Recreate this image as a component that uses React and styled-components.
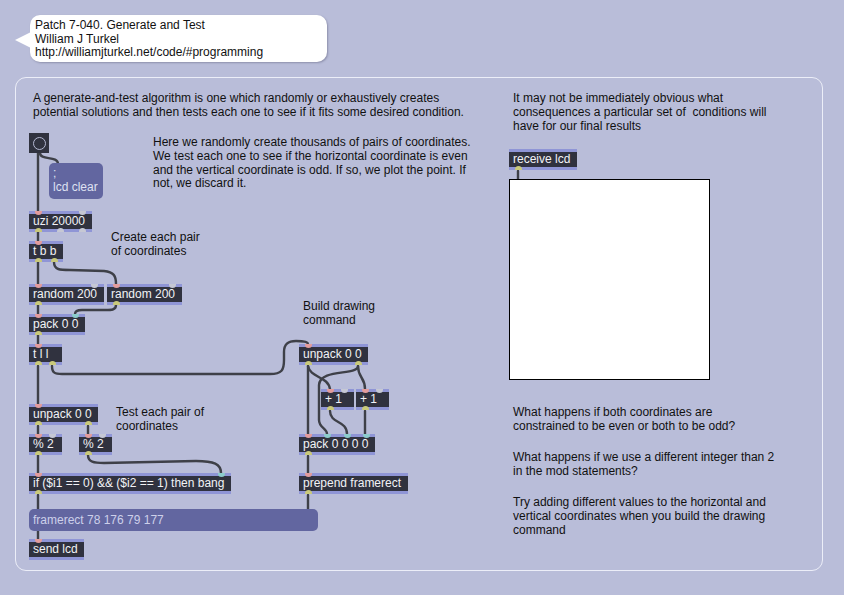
import styled, { createGlobalStyle, css } from "styled-components";

const GlobalStyle = createGlobalStyle`
  html, body {
    margin: 0;
    padding: 0;
    background: #b9bdd9;
  }
`;

const Page = styled.div`
  position: relative;
  width: 844px;
  height: 595px;
  overflow: hidden;
  background: #b9bdd9;
  font-family: "Liberation Sans", Arial, sans-serif;
  font-size: 12px;
  padding: 15px 0 0 0;
  box-sizing: border-box;
`;

const Bubble = styled.div`
  position: relative;
  margin-left: 30px;
  width: 297px;
  height: 47px;
  box-sizing: border-box;
  padding: 4px 5px;
  background: #ffffff;
  border-radius: 10px;
  box-shadow: 1px 1px 2px rgba(60, 60, 90, 0.35);
  color: #111;
  line-height: 13.5px;
  white-space: pre;

  &::before {
    content: "";
    position: absolute;
    left: -15px;
    top: 17px;
    border-style: solid;
    border-width: 8px 16px 8px 0;
    border-color: transparent #ffffff transparent transparent;
  }
`;

const Panel = styled.div`
  margin: 15px 0 0 15px;
  width: 808px;
  height: 494px;
  box-sizing: border-box;
  border: 1px solid #eceef8;
  border-radius: 11px;
`;

// the patcher canvas: every object sits at its own spot
const Comment = styled.div`
  position: absolute;
  left: ${(p) => p.$x}px;
  top: ${(p) => p.$y}px;
  color: #111;
  line-height: 13.8px;
  white-space: pre;
  z-index: 3;
`;

const Box = styled.div`
  position: absolute;
  left: ${(p) => p.$x}px;
  top: ${(p) => p.$y}px;
  width: ${(p) => p.$w}px;
  height: 21px;
  box-sizing: border-box;
  background: #30323f;
  border-top: 3px solid #8f95d6;
  border-bottom: 3px solid #8f95d6;
  color: #f2f2f6;
  line-height: 15px;
  padding-left: 4px;
  white-space: pre;
  z-index: 2;
`;

const portColors = {
  hot: "#e39c9c",
  cold: "#8ccccc",
  out: "#c9c97a",
  idle: "#c6c8d4",
};

const Port = styled.span`
  position: absolute;
  left: ${(p) => p.$x - 3.5}px;
  width: 7px;
  height: 4px;
  background: ${(p) => portColors[p.$kind]};
  ${(p) =>
    p.$side === "in"
      ? css`
          top: -3px;
          border-radius: 0 0 4px 4px;
        `
      : css`
          bottom: -3px;
          border-radius: 4px 4px 0 0;
        `}
`;

const Message = styled.div`
  position: absolute;
  left: ${(p) => p.$x}px;
  top: ${(p) => p.$y}px;
  width: ${(p) => p.$w}px;
  height: ${(p) => p.$h}px;
  box-sizing: border-box;
  background: #6266a0;
  border-radius: 5px;
  color: ${(p) => p.$ink || "#dfe1f2"};
  line-height: 14px;
  padding: ${(p) => p.$pad || "4px 5px"};
  white-space: pre;
  z-index: 2;
`;

const Bang = styled.div`
  position: absolute;
  left: 29px;
  top: 133px;
  width: 20px;
  height: 20px;
  background: #30323f;
  display: flex;
  align-items: center;
  justify-content: center;
  z-index: 2;

  &::after {
    content: "";
    width: 11px;
    height: 11px;
    border: 1.5px solid #b4b8d2;
    border-radius: 50%;
  }
`;

const Lcd = styled.div`
  position: absolute;
  left: 509px;
  top: 179px;
  width: 201px;
  height: 201px;
  box-sizing: border-box;
  background: #ffffff;
  border: 1px solid #000;
  z-index: 2;
`;

const Cords = styled.svg`
  position: absolute;
  left: 0;
  top: 0;
  width: 844px;
  height: 595px;
  z-index: 1;
  pointer-events: none;
`;

const objects = [
  { x: 29, y: 211, w: 63, text: "uzi 20000", ins: [["hot", 9], ["idle", 53]], outs: [["out", 9], ["idle", 31], ["idle", 53]] },
  { x: 29, y: 241, w: 34, text: "t b b", ins: [["hot", 9]], outs: [["out", 9], ["out", 25]] },
  { x: 29, y: 284, w: 75, text: "random 200", ins: [["hot", 9], ["idle", 65]], outs: [["out", 9]] },
  { x: 107, y: 284, w: 75, text: "random 200", ins: [["hot", 9], ["idle", 65]], outs: [["out", 9]] },
  { x: 29, y: 314, w: 56, text: "pack 0 0", ins: [["hot", 9], ["cold", 46]], outs: [["out", 9]] },
  { x: 29, y: 344, w: 33, text: "t l l", ins: [["hot", 9]], outs: [["out", 9], ["out", 23]] },
  { x: 29, y: 404, w: 69, text: "unpack 0 0", ins: [["hot", 9]], outs: [["out", 9], ["out", 59]] },
  { x: 29, y: 434, w: 33, text: "% 2", ins: [["hot", 9], ["idle", 23]], outs: [["out", 9]] },
  { x: 79, y: 434, w: 33, text: "% 2", ins: [["hot", 9], ["idle", 23]], outs: [["out", 9]] },
  { x: 29, y: 473, w: 202, text: "if ($i1 == 0) && ($i2 == 1) then bang", ins: [["hot", 9], ["cold", 192]], outs: [["out", 9]] },
  { x: 29, y: 539, w: 55, text: "send lcd", ins: [["hot", 9]], outs: [] },
  { x: 299, y: 344, w: 69, text: "unpack 0 0", ins: [["hot", 9]], outs: [["out", 9], ["out", 59]] },
  { x: 321, y: 389, w: 33, text: "+ 1", ins: [["hot", 9], ["idle", 23]], outs: [["out", 9]] },
  { x: 356, y: 389, w: 33, text: "+ 1", ins: [["hot", 9], ["idle", 23]], outs: [["out", 9]] },
  { x: 299, y: 434, w: 76, text: "pack 0 0 0 0", ins: [["hot", 9], ["cold", 28], ["cold", 48], ["cold", 67]], outs: [["out", 9]] },
  { x: 299, y: 473, w: 109, text: "prepend framerect", ins: [["hot", 9]], outs: [["out", 9]] },
  { x: 509, y: 149, w: 68, text: "receive lcd", ins: [], outs: [["out", 9]] },
];

const cords = [
  "M38 153 L38 211",
  "M40 153 C40 161, 58 155, 58 164",
  "M38 232 L38 241",
  "M38 262 L38 284",
  "M54 262 C54 270, 60 270, 70 270 L104 271 C114 272, 116 276, 116 284",
  "M38 305 L38 314",
  "M116 305 C116 311, 110 310, 100 310 L82 310 C77 310, 75 311, 75 314",
  "M38 335 L38 344",
  "M38 366 L38 404",
  "M52 366 C52 373, 55 374, 62 374 L270 374 C282 374, 284 370, 284 360 L284 352 C284 344, 288 341, 296 341 C304 341, 308 342, 308 344",
  "M38 426 L38 434",
  "M88 426 L88 434",
  "M38 455 L38 473",
  "M88 455 C88 462, 94 463, 104 463 L196 461 C214 461, 221 464, 221 473",
  "M38 495 L38 509",
  "M38 531 L38 539",
  "M308 495 L308 509",
  "M308 366 L308 434",
  "M308 366 C310 378, 328 376, 330 389",
  "M358 366 C358 378, 365 377, 365 389",
  "M358 366 C358 376, 320 368, 319 385 L319 420 C319 428, 327 428, 327 434",
  "M330 411 C330 424, 347 420, 347 434",
  "M365 411 L365 434",
  "M308 456 L308 473",
  "M518 171 L518 179",
];

const comments = [
  {
    x: 33,
    y: 92,
    text:
      "A generate-and-test algorithm is one which randomly or exhaustively creates\npotential solutions and then tests each one to see if it fits some desired condition.",
  },
  {
    x: 153,
    y: 136,
    text:
      "Here we randomly create thousands of pairs of coordinates.\nWe test each one to see if the horizontal coordinate is even\nand the vertical coordinate is odd. If so, we plot the point. If\nnot, we discard it.",
  },
  { x: 111, y: 231, text: "Create each pair\nof coordinates" },
  { x: 303, y: 300, text: "Build drawing\ncommand" },
  { x: 116, y: 406, text: "Test each pair of\ncoordinates" },
  {
    x: 513,
    y: 92,
    text:
      "It may not be immediately obvious what\nconsequences a particular set of  conditions will\nhave for our final results",
  },
  { x: 513, y: 406, text: "What happens if both coordinates are\nconstrained to be even or both to be odd?" },
  { x: 513, y: 451, text: "What happens if we use a different integer than 2\nin the mod statements?" },
  {
    x: 513,
    y: 496,
    text:
      "Try adding different values to the horizontal and\nvertical coordinates when you build the drawing\ncommand",
  },
];

export default function App() {
  return (
    <>
      <GlobalStyle />
      <Page>
        <Bubble>
          {"Patch 7-040. Generate and Test\nWilliam J Turkel\nhttp://williamjturkel.net/code/#programming"}
        </Bubble>
        <Panel />

        <Cords viewBox="0 0 844 595">
          {cords.map((d, i) => (
            <path key={i} d={d} fill="none" stroke="#3e4048" strokeWidth="2.4" strokeLinecap="round" />
          ))}
        </Cords>

        {comments.map((c, i) => (
          <Comment key={i} $x={c.x} $y={c.y}>
            {c.text}
          </Comment>
        ))}

        <Bang />
        <Message $x={49} $y={163} $w={54} $h={36} $pad="3px 4px">
          {";\nlcd clear"}
        </Message>
        <Message $x={29} $y={509} $w={289} $h={22} $ink="#cdd0ea" $pad="4px 4px">
          framerect 78 176 79 177
        </Message>

        {objects.map((o, i) => (
          <Box key={i} $x={o.x} $y={o.y} $w={o.w}>
            {o.text}
            {o.ins.map(([k, x], j) => (
              <Port key={"i" + j} $side="in" $kind={k} $x={x} />
            ))}
            {o.outs.map(([k, x], j) => (
              <Port key={"o" + j} $side="out" $kind={k} $x={x} />
            ))}
          </Box>
        ))}

        <Lcd />
      </Page>
    </>
  );
}
